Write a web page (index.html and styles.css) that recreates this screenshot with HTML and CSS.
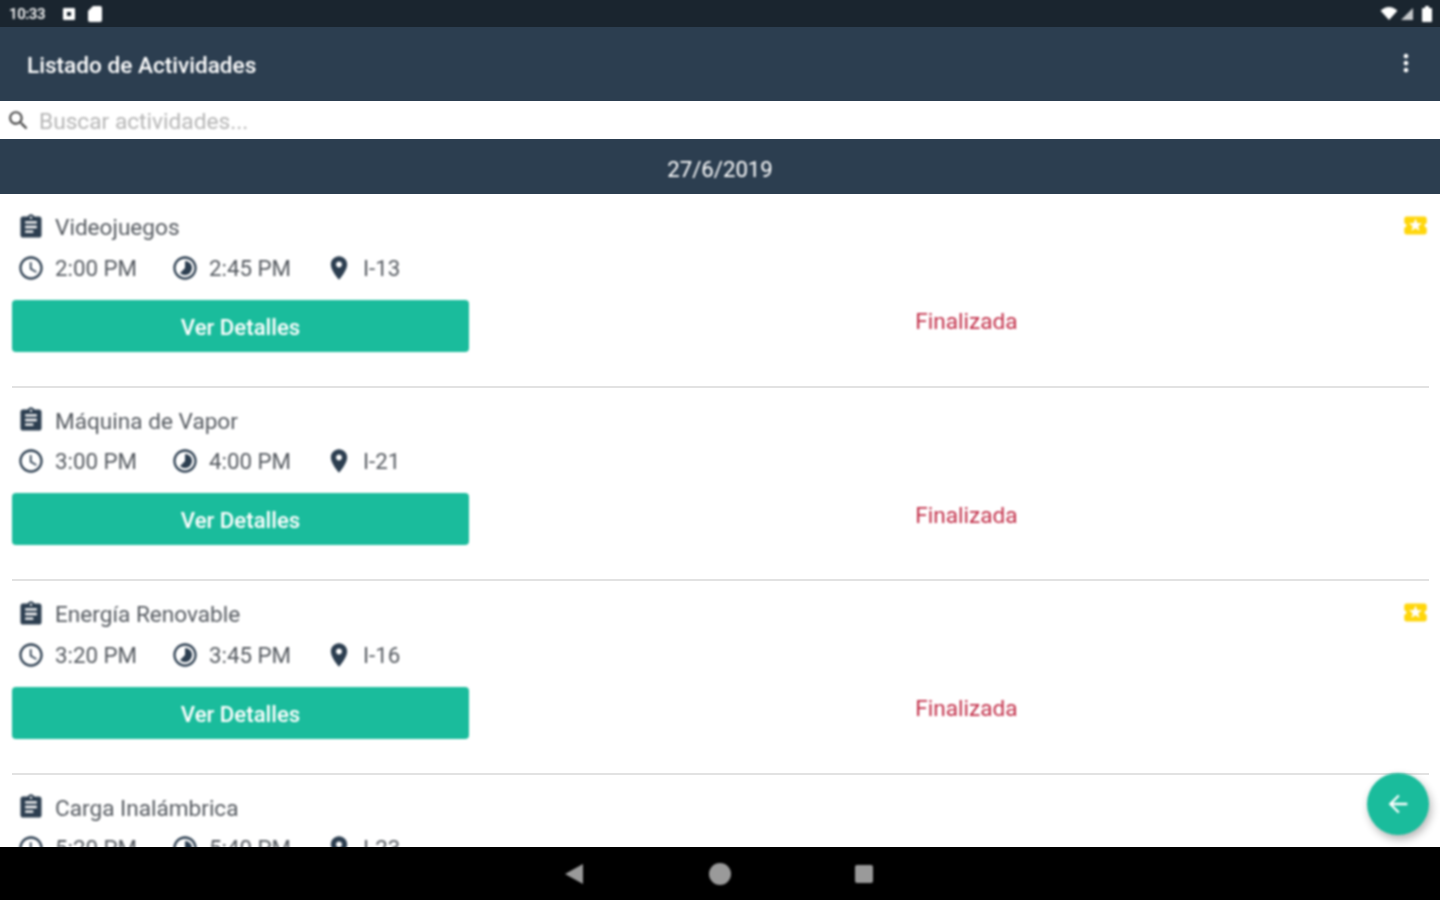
FILE: index.html
```html
<!DOCTYPE html>
<html lang="es">
<head>
    <meta charset="UTF-8">
    <meta name="viewport" content="width=device-width, initial-scale=1.0">
    <title>Listado de Actividades</title>
    <link rel="stylesheet" href="styles.css">
</head>
<body>
    <!-- Icon set -->
    <svg class="icon-defs" width="0" height="0">
        <symbol id="i-assignment" viewBox="0 0 24 24"><path d="M19 3h-4.18C14.4 1.84 13.3 1 12 1c-1.3 0-2.4.84-2.82 2H5c-1.1 0-2 .9-2 2v14c0 1.1.9 2 2 2h14c1.1 0 2-.9 2-2V5c0-1.1-.9-2-2-2zm-7 0c.55 0 1 .45 1 1s-.45 1-1 1-1-.45-1-1 .45-1 1-1zm2 14H7v-2h7v2zm3-4H7v-2h10v2zm0-4H7V7h10v2z"/></symbol>
        <symbol id="i-clock" viewBox="0 0 24 24"><path d="M11.99 2C6.47 2 2 6.48 2 12s4.47 10 9.99 10C17.52 22 22 17.52 22 12S17.52 2 11.99 2zM12 20c-4.42 0-8-3.58-8-8s3.58-8 8-8 8 3.58 8 8-3.58 8-8 8zm.5-13H11v6l5.25 3.15.75-1.23-4.5-2.67z"/></symbol>
        <symbol id="i-lapse" viewBox="0 0 24 24"><path d="M16.24 7.76C15.07 6.59 13.54 6 12 6v6l-4.24 4.24c2.34 2.34 6.14 2.34 8.49 0 2.34-2.34 2.34-6.14-.01-8.48zM12 2C6.48 2 2 6.48 2 12s4.48 10 10 10 10-4.48 10-10S17.52 2 12 2zm0 18c-4.42 0-8-3.58-8-8s3.58-8 8-8 8 3.58 8 8-3.58 8-8 8z"/></symbol>
        <symbol id="i-place" viewBox="0 0 24 24"><path d="M12 2C8.13 2 5 5.13 5 9c0 5.25 7 13 7 13s7-7.75 7-13c0-3.87-3.13-7-7-7zm0 9.5c-1.38 0-2.5-1.12-2.5-2.5s1.12-2.5 2.5-2.5 2.5 1.12 2.5 2.5-1.12 2.5-2.5 2.5z"/></symbol>
        <symbol id="i-ticket" viewBox="0 0 24 24"><path d="M20 12c0-1.1.9-2 2-2V6c0-1.1-.9-2-2-2H4c-1.1 0-1.99.9-1.99 2v4c1.1 0 1.99.9 1.99 2s-.89 2-2 2v4c0 1.1.9 2 2 2h16c1.1 0 2-.9 2-2v-4c-1.1 0-2-.9-2-2zm-4.42 4.8L12 14.5l-3.58 2.3 1.08-4.12-3.29-2.69 4.24-.25L12 5.8l1.54 3.95 4.24.25-3.29 2.69 1.09 4.11z"/></symbol>
    </svg>

    <div class="screen">
        <div class="statusbar">
            <span class="clock">10:33</span>
            <svg class="status-icon" viewBox="0 0 14 14"><path fill-rule="evenodd" d="M2 1h10a1 1 0 0 1 1 1v10a1 1 0 0 1-1 1H2a1 1 0 0 1-1-1V2a1 1 0 0 1 1-1zm3 4v4h4V5z"/></svg>
            <svg class="status-icon sd" viewBox="0 0 14 16"><path d="M5 0h7a2 2 0 0 1 2 2v12a2 2 0 0 1-2 2H2a2 2 0 0 1-2-2V5z"/></svg>
            <span class="status-right">
                <svg class="wifi" viewBox="0 0 18 14"><path d="M0 4C2.500 1.500 5.500 0 9 0s6.500 1.500 9 4l-9 10z"/></svg>
                <svg class="signal" viewBox="0 0 14 14"><path d="M14 0v14H0z"/></svg>
                <svg class="battery" viewBox="0 0 10 16"><path d="M3 0h4v2h2a1 1 0 0 1 1 1v12a1 1 0 0 1-1 1H1a1 1 0 0 1-1-1V3a1 1 0 0 1 1-1h2z"/></svg>
            </span>
        </div>

        <header class="appbar">
            <h1>Listado de Actividades</h1>
            <svg class="more" viewBox="0 0 24 24"><path d="M12 8c1.100 0 2-.9 2-2s-.9-2-2-2-2 .9-2 2 .9 2 2 2zm0 2c-1.100 0-2 .9-2 2s.9 2 2 2 2-.9 2-2-.9-2-2-2zm0 6c-1.100 0-2 .9-2 2s.9 2 2 2 2-.9 2-2-.9-2-2-2z"/></svg>
        </header>

        <div class="search">
            <svg class="search-icon" viewBox="0 0 24 24"><path d="M15.500 14h-.79l-.28-.27C15.410 12.590 16 11.110 16 9.500 16 5.910 13.090 3 9.500 3S3 5.910 3 9.500 5.910 16 9.500 16c1.610 0 3.090-.59 4.230-1.570l.27.28v.79l5 4.990L20.490 19l-4.990-5zm-6 0C7.010 14 5 11.990 5 9.500S7.010 5 9.500 5 14 7.010 14 9.500 11.990 14 9.500 14z"/></svg>
            <span class="search-text">Buscar actividades...</span>
        </div>

        <div class="date-strip"><span class="date">27/6/2019</span></div>

        <main class="list">
            <article class="activity">
                <div class="title-row">
                    <svg class="icon"><use href="#i-assignment"/></svg>
                    <span class="name">Videojuegos</span>
                    <svg class="ticket"><use href="#i-ticket"/></svg>
                </div>
                <div class="meta-row">
                    <span class="meta"><svg class="icon"><use href="#i-clock"/></svg>2:00 PM</span>
                    <span class="meta"><svg class="icon"><use href="#i-lapse"/></svg>2:45 PM</span>
                    <span class="meta"><svg class="icon"><use href="#i-place"/></svg>I-13</span>
                </div>
                <div class="action-row">
                    <button class="details">Ver Detalles</button>
                    <span class="state">Finalizada</span>
                </div>
            </article>

            <article class="activity">
                <div class="title-row">
                    <svg class="icon"><use href="#i-assignment"/></svg>
                    <span class="name">Máquina de Vapor</span>
                </div>
                <div class="meta-row">
                    <span class="meta"><svg class="icon"><use href="#i-clock"/></svg>3:00 PM</span>
                    <span class="meta"><svg class="icon"><use href="#i-lapse"/></svg>4:00 PM</span>
                    <span class="meta"><svg class="icon"><use href="#i-place"/></svg>I-21</span>
                </div>
                <div class="action-row">
                    <button class="details">Ver Detalles</button>
                    <span class="state">Finalizada</span>
                </div>
            </article>

            <article class="activity">
                <div class="title-row">
                    <svg class="icon"><use href="#i-assignment"/></svg>
                    <span class="name">Energía Renovable</span>
                    <svg class="ticket"><use href="#i-ticket"/></svg>
                </div>
                <div class="meta-row">
                    <span class="meta"><svg class="icon"><use href="#i-clock"/></svg>3:20 PM</span>
                    <span class="meta"><svg class="icon"><use href="#i-lapse"/></svg>3:45 PM</span>
                    <span class="meta"><svg class="icon"><use href="#i-place"/></svg>I-16</span>
                </div>
                <div class="action-row">
                    <button class="details">Ver Detalles</button>
                    <span class="state">Finalizada</span>
                </div>
            </article>

            <article class="activity">
                <div class="title-row">
                    <svg class="icon"><use href="#i-assignment"/></svg>
                    <span class="name">Carga Inalámbrica</span>
                </div>
                <div class="meta-row">
                    <span class="meta"><svg class="icon"><use href="#i-clock"/></svg>5:20 PM</span>
                    <span class="meta"><svg class="icon"><use href="#i-lapse"/></svg>5:40 PM</span>
                    <span class="meta"><svg class="icon"><use href="#i-place"/></svg>I-23</span>
                </div>
            </article>
        </main>

        <button class="fab">
            <svg viewBox="0 0 24 24"><path d="M20 11H7.830l5.590-5.590L12 4l-8 8 8 8 1.410-1.410L7.830 13H20v-2z"/></svg>
        </button>

        <nav class="navbar">
            <svg class="nav-back" viewBox="0 0 18 20"><path d="M18 0v20L0 10z"/></svg>
            <span class="nav-home"></span>
            <span class="nav-recent"></span>
        </nav>
    </div>
</body>
</html>
```

FILE: styles.css
```css
html, body {
    margin: 0;
    height: 100%;
}
body {
    background-color: #fff;
    font-family: Roboto, "Liberation Sans", sans-serif;
    overflow: hidden;
}
.icon-defs {
    position: absolute;
}
.screen {
    position: relative;
    display: flex;
    flex-direction: column;
    height: 900px;
}

/* soft look of the upscaled capture: only on content, so the bars keep their edges */
.statusbar > *,
.appbar > *,
.search > *,
.date,
.activity > *,
.fab,
.navbar > * {
    filter: blur(0.8px);
}

/* Status bar */
.statusbar {
    display: flex;
    align-items: center;
    height: 27px;
    padding: 0 8px 0 9px;
    box-sizing: border-box;
    background-color: #1a252f;
    color: #fff;
    fill: #fff;
}
.clock {
    width: 53px;
    font-size: 15px;
    font-weight: 500;
    letter-spacing: -0.4px;
}
.status-icon {
    width: 14px;
    height: 14px;
    margin-right: 12px;
}
.status-icon.sd {
    height: 16px;
}
.status-right {
    display: flex;
    align-items: center;
    gap: 2px;
    margin-left: auto;
}
.wifi {
    width: 18px;
    height: 13px;
}
.signal {
    width: 14px;
    height: 12px;
    opacity: 0.75;
}
.battery {
    width: 10px;
    height: 16px;
    margin-left: 6px;
}

/* App bar */
.appbar {
    display: flex;
    align-items: center;
    justify-content: space-between;
    height: 74px;
    padding: 2px 20px 0 27px;
    box-sizing: border-box;
    background-color: #2c3e50;
    fill: #fff;
}
.appbar h1 {
    margin: 0;
    color: #fff;
    font-size: 22.6px;
    font-weight: 500;
}
.more {
    width: 28px;
    height: 28px;
    margin-top: -4px;
}
.search {
    display: flex;
    align-items: center;
    gap: 8px;
    height: 38px;
    margin: 0 2px 0 3px;
    padding-left: 3px;
    background-color: #fff;
    color: #b5b5b5;
    font-size: 22.7px;
}
.search-icon {
    width: 25px;
    height: 25px;
    fill: #444;
}
.search-text {
    padding-top: 2px;
}
.date-strip {
    height: 55px;
    line-height: 60px;
    background-color: #2c3e50;
    color: #fff;
    font-size: 22.2px;
    text-align: center;
}
.date {
    display: inline-block;
}

/* Activities */
.list {
    flex: 1;
    min-height: 0;
    overflow: hidden;
    background-color: #fff;
}
.activity {
    height: 193.5px;
    margin: 0 11px 0 12px;
    box-sizing: border-box;
    padding-top: 16.8px;
    border-bottom: 2px solid #e2e2e2;
}
.activity:last-child {
    border-bottom: 0;
}
.icon {
    flex: none;
    width: 28px;
    height: 28px;
    fill: #2c3e50;
}
.title-row {
    display: flex;
    align-items: center;
    gap: 10px;
    height: 32px;
    padding-left: 5px;
}
.name {
    padding-top: 2px;
    color: #555a60;
    font-size: 22.6px;
}
.meta {
    display: flex;
    align-items: center;
    gap: 10px;
    width: 154px;
    color: #555a60;
    font-size: 22.3px;
}
.ticket {
    width: 27px;
    height: 27px;
    margin-left: auto;
    margin-top: -2px;
    fill: #ffd60a;
}
.meta-row {
    display: flex;
    align-items: center;
    height: 32px;
    margin-top: 9px;
    padding-left: 5px;
}
.action-row {
    display: grid;
    grid-template-columns: 457px 1fr;
    align-items: center;
    margin-top: 16px;
}
.details {
    height: 52px;
    padding: 2px 0 0;
    border: 0;
    border-radius: 4px;
    background-color: #1abc9c;
    color: #fff;
    font-family: inherit;
    font-size: 22.2px;
    font-weight: 500;
}
.state {
    margin-top: -8px;
    padding-left: 35px;
    color: #c2304a;
    font-size: 22.6px;
    text-align: center;
}

.fab {
    position: absolute;
    left: 1367px;
    top: 773px;
    width: 62px;
    height: 62px;
    padding: 17px;
    border: 0;
    border-radius: 50%;
    background-color: #1abc9c;
    box-shadow: 2px 4px 8px rgba(0, 0, 0, 0.3);
    fill: #fff;
}
.fab svg {
    display: block;
    width: 28px;
    height: 28px;
}

/* Android nav bar */
.navbar {
    display: flex;
    align-items: center;
    justify-content: center;
    height: 53px;
    flex: none;
    background-color: #000;
}
.nav-back {
    width: 18px;
    height: 20px;
    margin-left: -3px;
    fill: #9a9a9a;
}
.nav-home {
    width: 22px;
    height: 22px;
    margin: 0 124px 0 126px;
    border-radius: 50%;
    background-color: #9a9a9a;
}
.nav-recent {
    width: 18px;
    height: 18px;
    border-radius: 2px;
    background-color: #9a9a9a;
}
```
